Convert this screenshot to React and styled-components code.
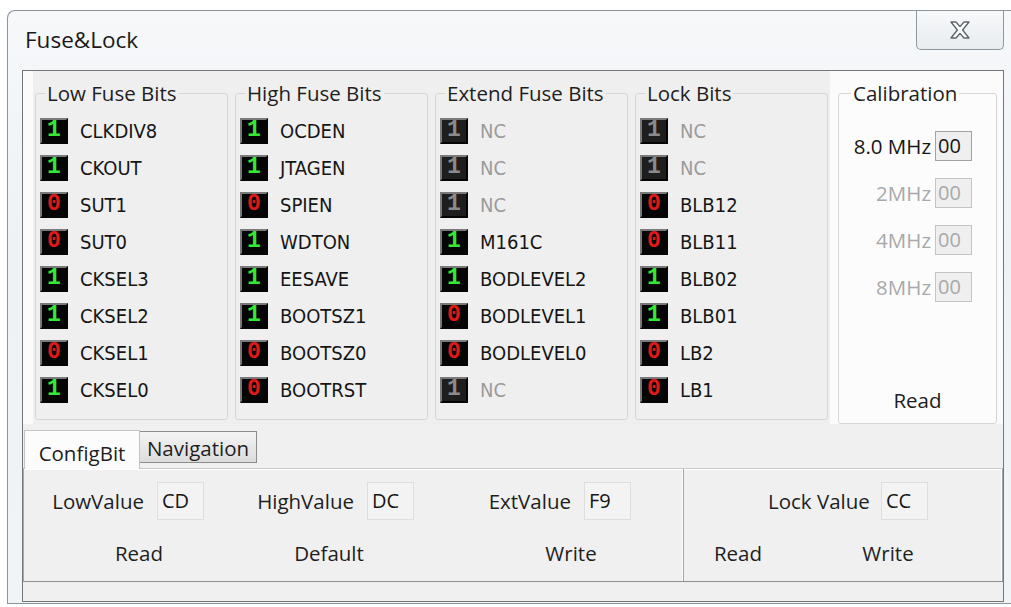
import React from 'react';
import styled, { createGlobalStyle } from 'styled-components';

const GlobalStyle = createGlobalStyle`
  html, body {
    margin: 0;
    padding: 0;
    background: #ffffff;
  }
  body {
    font-family: "Open Sans", "Noto Sans", "Liberation Sans", sans-serif;
    color: #1e1e1e;
  }
`;

const Page = styled.div`
  width: 1011px;
  height: 607px;
  overflow: hidden;
  background: #ffffff;
`;

const Window = styled.div`
  margin: 10px 0 0 7px;
  height: 592px;
  display: flex;
  flex-direction: column;
  border-left: 1px solid #8d959c;
  border-top: 1px solid #8d959c;
  border-bottom: 1px solid #8d959c;
  border-top-left-radius: 8px;
  background: linear-gradient(180deg, #f6f8fa 0%, #eef2f5 40%, #f1f4f6 100%);
`;

const TitleBar = styled.div`
  height: 59px;
  display: flex;
  align-items: flex-start;
  padding-left: 17px;
  flex-shrink: 0;
`;

const Title = styled.div`
  margin-top: 17px;
  font-size: 22.5px;
  line-height: 24px;
  color: #1a1a1a;
`;

const CloseButton = styled.div`
  margin-left: auto;
  margin-right: 7px;
  width: 88px;
  height: 39px;
  box-sizing: border-box;
  border: 1px solid #8f979e;
  border-top: none;
  border-radius: 0 0 5px 5px;
  background: linear-gradient(180deg, #f7f8fa, #e8ecef);
  display: flex;
  align-items: center;
  justify-content: center;
`;

const Client = styled.div`
  margin-left: 14px;
  width: 982px;
  height: 532px;
  box-sizing: border-box;
  border: 1px solid #767676;
  background: #f0f0f0;
  display: flex;
  flex-direction: column;
`;

const BitsPanel = styled.div`
  height: 353px;
  display: flex;
  background: #fbfbfb;
  flex-shrink: 0;
`;

const GroupArea = styled.div`
  margin-left: 10px;
  padding: 2px 2px 4px 2px;
  display: flex;
  gap: 7px;
  background: #efefef;
`;

const Group = styled.fieldset`
  margin: 8px 0 0 0;
  width: ${(props) => props.width}px;
  box-sizing: border-box;
  padding: 7px 0 0 4px;
  border: 1px solid #d6d6d6;
  border-radius: 3px;
  background: ${(props) => props.bg || 'transparent'};
  min-width: 0;
`;

const Legend = styled.legend`
  margin-left: 5px;
  padding: 0 2px;
  font-size: 20.5px;
  line-height: 24px;
  color: #1e1e1e;
`;

const BitRow = styled.div`
  height: 37px;
  display: flex;
  align-items: center;
`;

const BitBox = styled.div`
  width: 28px;
  height: 26px;
  box-sizing: border-box;
  border: 2px solid;
  border-color: #7a7a7a #050505 #050505 #7a7a7a;
  background: ${(props) => (props.off ? '#1e1e1e' : '#050505')};
  display: flex;
  align-items: center;
  justify-content: center;
  font-family: "Liberation Mono", "DejaVu Sans Mono", monospace;
  font-weight: bold;
  font-size: 23px;
  line-height: 1;
  color: ${(props) => props.color};
`;

const BitName = styled.span`
  margin-left: 12px;
  font-family: "Liberation Sans Narrow", "DejaVu Sans Condensed", "Liberation Sans", sans-serif;
  font-size: 20px;
  line-height: 24px;
  color: ${(props) => (props.off ? '#9b9b9b' : '#151515')};
`;

const CalibGroup = styled(Group)`
  margin: 10px 0 0 8px;
  padding: 26px 24px 11px 0;
  display: flex;
  flex-direction: column;
  align-items: flex-end;
  gap: 17px;

  & > legend {
    margin-left: 12px;
  }
`;

const CalibRow = styled.div`
  display: flex;
  align-items: center;
  gap: 4px;
  font-size: 20.5px;
  color: ${(props) => (props.dim ? '#a9a9a9' : '#151515')};
`;

const CalibBox = styled.div`
  width: 37px;
  height: 30px;
  box-sizing: border-box;
  border: 1px solid ${(props) => (props.dim ? '#c4c4c4' : '#a2a2a2')};
  background: #efefef;
  font-size: 20px;
  line-height: 28px;
  padding-left: 2px;
  color: ${(props) => (props.dim ? '#a9a9a9' : '#151515')};
`;

const CalibRead = styled.div`
  margin-top: auto;
  align-self: stretch;
  padding-left: 24px;
  text-align: center;
  font-size: 20.5px;
  line-height: 24px;
`;

const TabStrip = styled.div`
  height: 44px;
  display: flex;
  align-items: flex-end;
  padding-left: 1px;
  flex-shrink: 0;
`;

const Tab = styled.div`
  position: relative;
  box-sizing: border-box;
  width: ${(props) => (props.active ? 116 : 118)}px;
  height: ${(props) => (props.active ? 39 : 32)}px;
  margin-bottom: ${(props) => (props.active ? -1 : 5)}px;
  margin-left: ${(props) => (props.active ? 0 : -1)}px;
  padding-top: ${(props) => (props.active ? 10 : 4)}px;
  border: 1px solid ${(props) => (props.active ? '#c4c4c4' : '#8c8c8c')};
  border-bottom: ${(props) => (props.active ? 'none' : '1px solid #8c8c8c')};
  background: ${(props) => (props.active ? '#fcfcfc' : 'linear-gradient(180deg, #f4f4f4, #dcdcdc)')};
  z-index: ${(props) => (props.active ? 1 : 0)};
  text-align: center;
  font-size: 20.5px;
  line-height: 24px;
  color: #1e1e1e;
`;

const TabBody = styled.div`
  height: 114px;
  box-sizing: border-box;
  display: flex;
  border-top: 1px solid #c8c8c8;
  border-left: 1px solid #a8a8a8;
  border-bottom: 1px solid #8e8e8e;
  background: #f0f0f0;
  box-shadow: inset 0 1px 0 #ffffff;
  flex-shrink: 0;
`;

const Pane = styled.div`
  width: ${(props) => props.width || 'auto'};
  flex: ${(props) => (props.width ? 'none' : 1)};
  box-sizing: border-box;
  display: flex;
  flex-direction: column;
  padding-top: 13px;
  border-right: 1px solid #a6a6a6;
  box-shadow: inset -1px 0 0 #ffffff;
`;

const FieldGrid = styled.div`
  display: grid;
  grid-template-columns: ${(props) => props.cols};
  padding-left: ${(props) => props.indent}px;
`;

const Field = styled.div`
  display: flex;
  align-items: center;
`;

const FieldLabel = styled.span`
  width: 100px;
  text-align: right;
  white-space: nowrap;
  font-size: 20.5px;
  line-height: 24px;
`;

const ValueBox = styled.div`
  margin-left: 13px;
  width: 47px;
  height: 38px;
  box-sizing: border-box;
  border: 1px solid #dedede;
  background: #f3f3f3;
  padding-left: 4px;
  font-size: 20px;
  line-height: 36px;
  color: #151515;
`;

const ButtonRow = styled.div`
  margin-top: 21px;
  display: flex;
  padding-left: ${(props) => props.indent}px;
`;

const FlatButton = styled.div`
  width: 80px;
  margin-left: ${(props) => props.space || 0}px;
  text-align: center;
  font-size: 20.5px;
  line-height: 24px;
  color: #1e1e1e;
`;

const StatusBar = styled.div`
  flex: 1;
  background: #f0f0f0;
`;

const lowFuse = [
  ['1', 'CLKDIV8'],
  ['1', 'CKOUT'],
  ['0', 'SUT1'],
  ['0', 'SUT0'],
  ['1', 'CKSEL3'],
  ['1', 'CKSEL2'],
  ['0', 'CKSEL1'],
  ['1', 'CKSEL0'],
];

const highFuse = [
  ['1', 'OCDEN'],
  ['1', 'JTAGEN'],
  ['0', 'SPIEN'],
  ['1', 'WDTON'],
  ['1', 'EESAVE'],
  ['1', 'BOOTSZ1'],
  ['0', 'BOOTSZ0'],
  ['0', 'BOOTRST'],
];

const extFuse = [
  ['1', 'NC'],
  ['1', 'NC'],
  ['1', 'NC'],
  ['1', 'M161C'],
  ['1', 'BODLEVEL2'],
  ['0', 'BODLEVEL1'],
  ['0', 'BODLEVEL0'],
  ['1', 'NC'],
];

const lockBits = [
  ['1', 'NC'],
  ['1', 'NC'],
  ['0', 'BLB12'],
  ['0', 'BLB11'],
  ['1', 'BLB02'],
  ['1', 'BLB01'],
  ['0', 'LB2'],
  ['0', 'LB1'],
];

const bitColor = (value, off) => {
  if (off) return '#8a8a8a';
  return value === '1' ? '#34e834' : '#e01818';
};

const BitGroup = ({ title, bits }) => (
  <Group width={193}>
    <Legend>{title}</Legend>
    {bits.map(([value, name], i) => {
      const off = name === 'NC';
      return (
        <BitRow key={i}>
          <BitBox off={off} color={bitColor(value, off)}>{value}</BitBox>
          <BitName off={off}>{name}</BitName>
        </BitRow>
      );
    })}
  </Group>
);

const CloseIcon = () => (
  <svg width="22" height="20" viewBox="0 0 22 20">
    <path
      d="M2 2 H7 L11 6.6 L15 2 H20 L13.6 10 L20 18 H15 L11 13.4 L7 18 H2 L8.4 10 Z"
      fill="#ffffff"
      stroke="#5d656d"
      strokeWidth="1.4"
      strokeLinejoin="round"
    />
  </svg>
);

const App = () => (
  <Page>
    <GlobalStyle />
    <Window>
      <TitleBar>
        <Title>Fuse&amp;Lock</Title>
        <CloseButton>
          <CloseIcon />
        </CloseButton>
      </TitleBar>

      <Client>
        <BitsPanel>
          <GroupArea>
            <BitGroup title="Low Fuse Bits" bits={lowFuse} />
            <BitGroup title="High Fuse Bits" bits={highFuse} />
            <BitGroup title="Extend Fuse Bits" bits={extFuse} />
            <BitGroup title="Lock Bits" bits={lockBits} />
          </GroupArea>

          <CalibGroup width={159} bg="#fcfcfc">
            <Legend>Calibration</Legend>
            <CalibRow>
              8.0 MHz <CalibBox>00</CalibBox>
            </CalibRow>
            <CalibRow dim>
              2MHz <CalibBox dim>00</CalibBox>
            </CalibRow>
            <CalibRow dim>
              4MHz <CalibBox dim>00</CalibBox>
            </CalibRow>
            <CalibRow dim>
              8MHz <CalibBox dim>00</CalibBox>
            </CalibRow>
            <CalibRead>Read</CalibRead>
          </CalibGroup>
        </BitsPanel>

        <TabStrip>
          <Tab active>ConfigBit</Tab>
          <Tab>Navigation</Tab>
        </TabStrip>

        <TabBody>
          <Pane width="660px">
            <FieldGrid cols="210px 217px 160px" indent={20}>
              <Field>
                <FieldLabel>LowValue</FieldLabel>
                <ValueBox>CD</ValueBox>
              </Field>
              <Field>
                <FieldLabel>HighValue</FieldLabel>
                <ValueBox>DC</ValueBox>
              </Field>
              <Field>
                <FieldLabel>ExtValue</FieldLabel>
                <ValueBox>F9</ValueBox>
              </Field>
            </FieldGrid>
            <ButtonRow indent={75}>
              <FlatButton>Read</FlatButton>
              <FlatButton space={110}>Default</FlatButton>
              <FlatButton space={162}>Write</FlatButton>
            </ButtonRow>
          </Pane>
          <Pane>
            <FieldGrid cols="160px" indent={84}>
              <Field>
                <FieldLabel>Lock Value</FieldLabel>
                <ValueBox>CC</ValueBox>
              </Field>
            </FieldGrid>
            <ButtonRow indent={14}>
              <FlatButton>Read</FlatButton>
              <FlatButton space={70}>Write</FlatButton>
            </ButtonRow>
          </Pane>
        </TabBody>

        <StatusBar />
      </Client>
    </Window>
  </Page>
);

export default App;
